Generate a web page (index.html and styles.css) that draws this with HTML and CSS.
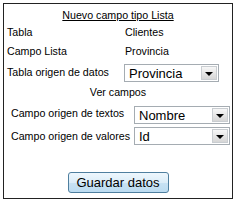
FILE: index.html
```html
<!DOCTYPE html>
<html lang="es">
<head>
<meta charset="utf-8">
<title>Nuevo campo tipo Lista</title>
<link rel="stylesheet" href="styles.css">
</head>
<body>
<div class="box">
  <div class="title"><span>Nuevo campo tipo Lista</span></div>
  <div class="row r-tabla"><span class="label">Tabla</span><span class="value">Clientes</span></div>
  <div class="row r-campo"><span class="label">Campo Lista</span><span class="value">Provincia</span></div>
  <div class="row r-origen">
    <span class="label lab-sel">Tabla origen de datos</span>
    <div class="sel sel-a"><span class="txt">Provincia</span><span class="arr"><i class="tri"></i></span></div>
  </div>
  <div class="ver">Ver campos</div>
  <div class="sub r-textos">
    <span class="sublabel lab-up">Campo origen de textos</span>
    <div class="sel sel-b"><span class="txt">Nombre</span><span class="arr"><i class="tri"></i></span></div>
  </div>
  <div class="sub r-valores">
    <span class="sublabel">Campo origen de valores</span>
    <div class="sel sel-b"><span class="txt">Id</span><span class="arr"><i class="tri"></i></span></div>
  </div>
  <div class="actions"><button class="btn" type="button">Guardar datos</button></div>
</div>
</body>
</html>
```

FILE: styles.css
```css
html, body {
  margin: 0;
  padding: 0;
  background: #fff;
}
body {
  font-family: "Liberation Sans", Arial, sans-serif;
  font-size: 10.67px;
  color: #000;
}
.box {
  margin: 3px;
  width: 228px;
  height: 194px;
  border: 1px solid #222;
  display: flex;
  flex-direction: column;
}
.title {
  height: 21px;
  display: flex;
  align-items: center;
  justify-content: center;
}
.title span {
  text-decoration: underline;
}
.row {
  display: flex;
  align-items: center;
  padding-left: 3px;
}
.label {
  width: 118px;
  flex: none;
}
.label.lab-sel {
  width: 117px;
  padding-bottom: 3px;
}
.r-tabla { height: 14px; }
.r-campo { height: 23px; }
.r-origen { height: 22px; }
.ver {
  height: 15px;
  display: flex;
  align-items: center;
  justify-content: center;
}
.sub {
  display: flex;
  align-items: center;
  padding-left: 7px;
}
.sublabel {
  width: 123px;
  flex: none;
}
.lab-up { padding-bottom: 5px; }
.r-textos { height: 20px; margin-top: 6px; }
.r-valores { height: 20px; margin-top: 1px; }
.sel {
  box-sizing: border-box;
  height: 18px;
  border: 1px solid #a5acb2;
  background: #fff;
  display: flex;
  align-items: center;
  padding-left: 4px;
  font-size: 13px;
}
.sel-a { width: 95px; }
.sel-b { width: 96px; }
.sel .txt { flex: 1; }
.arr {
  box-sizing: border-box;
  width: 16px;
  height: 14px;
  margin-right: 1px;
  border: 1px solid #c9cdd1;
  background: linear-gradient(#f7f7f7, #d6d6d6);
  display: flex;
  align-items: center;
  justify-content: center;
}
.tri {
  width: 0;
  height: 0;
  border-left: 4px solid transparent;
  border-right: 4px solid transparent;
  border-top: 4px solid #000;
  margin-top: 1px;
}
.actions {
  margin-top: auto;
  margin-bottom: 5px;
  display: flex;
  justify-content: center;
}
.btn {
  box-sizing: border-box;
  width: 101px;
  height: 21px;
  padding: 0;
  border: 1px solid #4f7f9f;
  border-radius: 3px;
  background: linear-gradient(#eef7fd 0%, #dcedf8 50%, #c8e2f3 51%, #bcdcf1 100%);
  font-family: "Liberation Sans", Arial, sans-serif;
  font-size: 13px;
  color: #000;
}
```
